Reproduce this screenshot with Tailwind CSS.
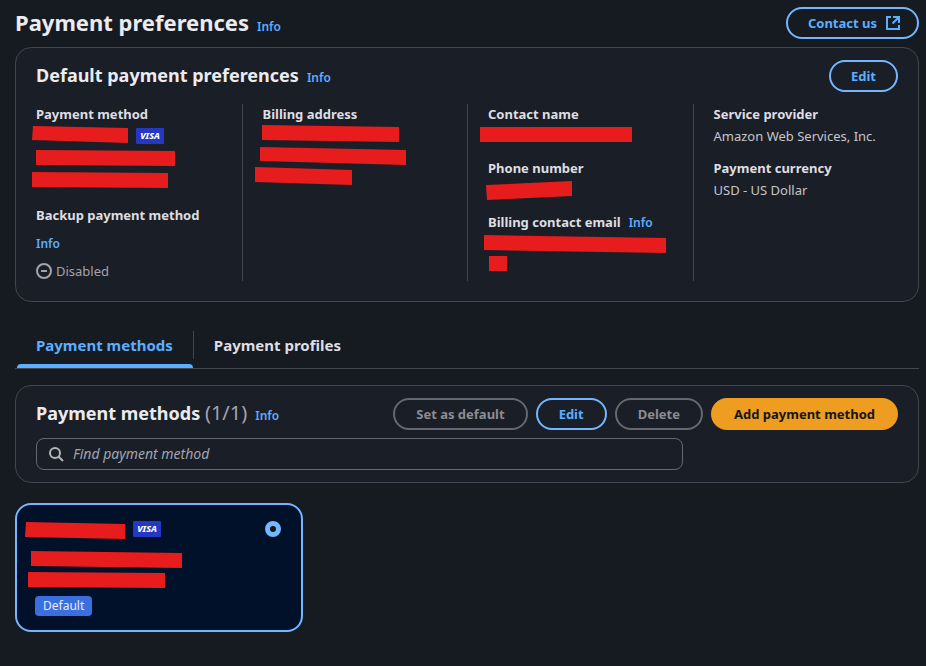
<!DOCTYPE html>
<html lang="en">
<head>
<meta charset="utf-8">
<meta name="viewport" content="width=device-width, initial-scale=1">
<title>Payment preferences</title>
<script src="https://cdn.jsdelivr.net/npm/@tailwindcss/browser@4"></script>
</head>
<body class="min-h-screen bg-[#161b22] font-['Noto_Sans',sans-serif] text-[13px] leading-5 text-[#c6c6cd]">
<main class="flex flex-col pt-[7px] pr-[7px] pb-8 pl-[15px]">

  <header class="flex items-center justify-between">
    <div class="flex items-baseline gap-2 pb-0.5">
      <h1 class="text-[22px] leading-7 font-bold text-[#ebebf0]">Payment preferences</h1>
      <a href="#" class="text-xs font-semibold text-[#5caeff]">Info</a>
    </div>
    <button type="button" class="flex h-8 items-center gap-2 rounded-full border-2 border-[#75b6ff] pr-4 pl-5 font-bold text-[#5caeff]">Contact us
      <svg class="size-4" viewBox="0 0 16 16" fill="none" stroke="currentColor" stroke-width="2" aria-hidden="true"><path d="M6 2H2v12h12v-4M8 2h6v6M14 2 7.5 8.5"/></svg>
    </button>
  </header>

  <section class="mt-2 rounded-2xl border border-[#424650] bg-[#1a1e26] px-5 pt-3 pb-5">
    <div class="flex items-center justify-between">
      <div class="flex items-baseline gap-2 pb-0.5">
        <h2 class="text-lg leading-6 font-bold text-[#ebebf0]">Default payment preferences</h2>
        <a href="#" class="text-xs font-semibold text-[#5caeff]">Info</a>
      </div>
      <button type="button" class="h-8 rounded-full border-2 border-[#75b6ff] px-5 font-bold text-[#5caeff]">Edit</button>
    </div>
    <dl class="-mx-5 mt-3 grid grid-cols-4">
      <div class="pl-5">
        <dt class="font-bold text-[#dedee3]">Payment method</dt>
        <dd class="mt-0.5 mb-3">
          <svg class="block h-[67px] w-full overflow-visible" role="img" aria-label="Redacted card, Visa">
            <g fill="#e71d1d"><path d="M-3 0 92 2v15L-4 14z"/><path d="M0 24l139 1v15L0 39z"/><path d="M-4 46l136 1v15L-4 61z"/></g>
            <rect x="100" y="2" width="28" height="16" rx="1" fill="#2438c4"/>
            <text x="114" y="13" text-anchor="middle" fill="#fff" class="text-[9px] font-extrabold italic">VISA</text>
          </svg>
        </dd>
        <dt class="font-bold text-[#dedee3]">Backup payment method</dt>
        <dd>
          <a href="#" class="mt-[9px] block text-xs leading-5 font-semibold text-[#5caeff]">Info</a>
          <span class="mt-[7px] flex items-center gap-1 text-[#a4a4ad]">
            <svg class="size-4" viewBox="0 0 16 16" fill="none" stroke="currentColor" stroke-width="2" aria-hidden="true"><circle cx="8" cy="8" r="7"/><path d="M5 8h6"/></svg>
            Disabled
          </span>
        </dd>
      </div>
      <div class="border-l border-[#424650] pl-5">
        <dt class="font-bold text-[#dedee3]">Billing address</dt>
        <dd class="mt-0.5">
          <svg class="block h-[60px] w-full overflow-visible" role="img" aria-label="Redacted address" fill="#e71d1d"><path d="M-1-1 136 1v15L-1 14z"/><path d="M-3 21l146 3v15L-3 35z"/><path d="M-8 41l97 3v15L-8 56z"/></svg>
        </dd>
      </div>
      <div class="border-l border-[#424650] pl-5">
        <dt class="font-bold text-[#dedee3]">Contact name</dt>
        <dd class="mt-0.5 mb-3">
          <svg class="block h-5 w-full overflow-visible" role="img" aria-label="Redacted name" fill="#e71d1d"><path d="M-8 1h152v15H-8z"/></svg>
        </dd>
        <dt class="font-bold text-[#dedee3]">Phone number</dt>
        <dd class="mt-0.5 mb-3">
          <svg class="block h-5 w-full overflow-visible" role="img" aria-label="Redacted phone" fill="#e71d1d"><path d="M-2 5 84 1v15L-1 20z"/></svg>
        </dd>
        <dt class="flex items-baseline gap-2 font-bold text-[#dedee3]">Billing contact email <a href="#" class="text-xs leading-5 font-semibold text-[#5caeff]">Info</a></dt>
        <dd class="mt-0.5">
          <svg class="block h-10 w-full overflow-visible" role="img" aria-label="Redacted email" fill="#e71d1d"><path d="M-4 0l182 3v15L-4 15z"/><path d="M1 21h18v15H1z"/></svg>
        </dd>
      </div>
      <div class="border-l border-[#424650] pl-5">
        <dt class="font-bold text-[#dedee3]">Service provider</dt>
        <dd class="mt-0.5 mb-3">Amazon Web Services, Inc.</dd>
        <dt class="font-bold text-[#dedee3]">Payment currency</dt>
        <dd class="mt-0.5">USD - US Dollar</dd>
      </div>
    </dl>
  </section>

  <nav class="mt-[29px] flex border-b border-[#424650] text-[15px] font-bold" aria-label="Payment sections">
    <a href="#" aria-current="page" class="relative mb-[9px] border-r border-[#424650] py-1 pr-5 pl-[21px] text-[#5caeff]">Payment methods<span class="absolute right-0 -bottom-[9px] left-0.5 h-1 rounded-t-sm bg-[#5caeff]"></span></a>
    <a href="#" class="mb-[9px] py-1 pl-5 text-[#dedee3]">Payment profiles</a>
  </nav>

  <section class="mt-4 rounded-2xl border border-[#424650] bg-[#1a1e26] px-5 py-3">
    <div class="flex items-center justify-between">
      <div class="flex items-baseline gap-2 pb-0.5">
        <h2 class="text-lg leading-6 font-bold text-[#ebebf0]">Payment methods <span class="text-xl leading-6 font-normal text-[#a4a4ad]">(1/1)</span></h2>
        <a href="#" class="text-xs font-semibold text-[#5caeff]">Info</a>
      </div>
      <div class="flex gap-2 font-bold">
        <button type="button" disabled class="h-8 rounded-full border-2 border-[#656871] px-[21px] text-[#8c8c94]">Set as default</button>
        <button type="button" class="h-8 rounded-full border-2 border-[#75b6ff] px-[21px] text-[#5caeff]">Edit</button>
        <button type="button" disabled class="h-8 rounded-full border-2 border-[#656871] px-[21px] text-[#8c8c94]">Delete</button>
        <button type="button" class="h-8 rounded-full border-2 border-[#ee9d20] bg-[#ee9d20] px-[21px] text-[#13161b]">Add payment method</button>
      </div>
    </div>
    <label class="mt-2 flex h-8 w-3/4 items-center gap-2 rounded-lg border border-[#656871] px-3">
      <svg class="size-4 text-[#b4b4bb]" viewBox="0 0 16 16" fill="none" stroke="currentColor" stroke-width="2" aria-hidden="true"><circle cx="6" cy="7" r="5"/><path d="m9.5 10.5 4.5 4.5"/></svg>
      <input type="search" aria-label="Find payment method" placeholder="Find payment method" class="min-w-0 flex-1 bg-transparent text-sm outline-none placeholder:text-[#a4a4ad] placeholder:italic">
    </label>
  </section>

  <article class="mt-5 w-72 rounded-2xl border-2 border-[#75b6ff] bg-[#001129] pt-4 pr-5 pb-3.5 pl-[18px]">
    <div class="flex justify-between">
      <svg class="block h-[74px] w-48 overflow-visible" role="img" aria-label="Redacted card, Visa">
        <g fill="#e71d1d"><path d="M-9 1 90 3v15L-10 16z"/><path d="M-4 30l151 2v15L-4 45z"/><path d="M-7 51l137 1v15L-7 66z"/></g>
        <rect x="98" y="0" width="28" height="16" rx="1" fill="#2438c4"/>
        <text x="112" y="11" text-anchor="middle" fill="#fff" class="text-[9px] font-extrabold italic">VISA</text>
      </svg>
      <input type="radio" checked aria-label="Select Visa card" class="size-4 appearance-none rounded-full border-[5px] border-[#75b6ff] bg-[#13161b]">
    </div>
    <span class="inline-block rounded bg-[#3b6fdf] px-2 text-xs leading-5 text-[#ebebf0]">Default</span>
  </article>
</main>
</body>
</html>
